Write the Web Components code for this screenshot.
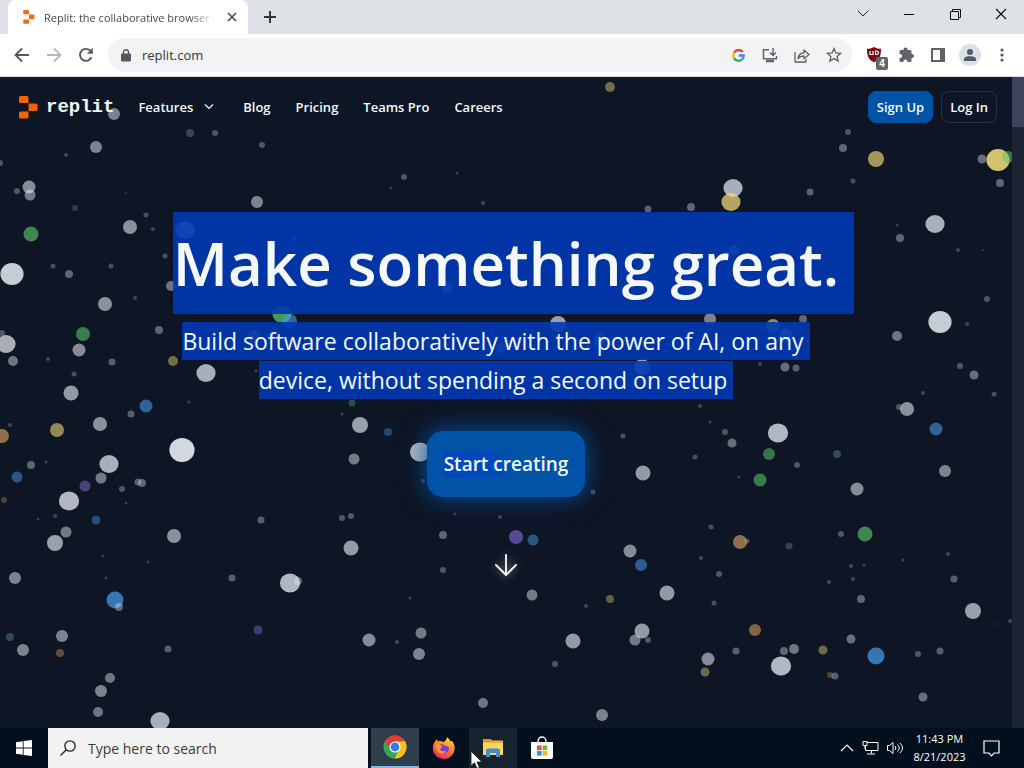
<!DOCTYPE html>
<html lang="en">
<head>
<meta charset="utf-8">
<title>Replit: the collaborative browser based IDE</title>
<style>
  body {
    margin: 0;
    height: 100vh;
    display: flex;
    flex-direction: column;
    overflow: hidden;
    font-family: "Open Sans", "Noto Sans", sans-serif;
  }
  site-page { flex: 1; min-height: 0; }
</style>
</head>
<body>
<browser-tabs>Replit: the collaborative browser based IDE</browser-tabs>
<browser-toolbar address="replit.com" blocked="4"></browser-toolbar>
<site-page>
  <star-field slot="background"></star-field>
  <site-nav></site-nav>
  <hero-banner>
    <span slot="title">Make something great.</span>
    <span slot="line-one">Build software collaboratively with the power of AI, on any</span>
    <span slot="line-two">device, without spending a second on setup</span>
    <span slot="action">Start creating</span>
  </hero-banner>
</site-page>
<task-bar time="11:43 PM" date="8/21/2023"></task-bar>

<script>
// Base element: clones the static template of the class into an open shadow root
class BaseElement extends HTMLElement {
  constructor() {
    super();
    this.attachShadow({ mode: 'open' });
    const template = document.createElement('template');
    template.innerHTML = `
      <style>
        * { box-sizing: border-box; }
        button { font: inherit; color: inherit; background: none; border: 0; padding: 0; display: flex; align-items: center; justify-content: center; }
        a { color: inherit; text-decoration: none; }
        input { font: inherit; color: inherit; border: 0; outline: 0; background: none; padding: 0; min-width: 0; }
        svg { display: block; flex: none; }
      </style>
      ${this.constructor.markup}
    `;
    this.shadowRoot.appendChild(template.content.cloneNode(true));
  }
}

const replitMark = `
  <path d="M1 0h7a1.500 1.500 0 0 1 1.500 1.500V7H1.500A1.500 1.500 0 0 1 0 5.500V1.500A1.500 1.500 0 0 1 1.500 0z"/>
  <path d="M9.500 7.500H17A1.500 1.500 0 0 1 18.500 9v4.500A1.500 1.500 0 0 1 17 15H9.500z"/>
  <path d="M1.500 15.500h8V21A1.500 1.500 0 0 1 8 22.500H1.500A1.500 1.500 0 0 1 0 21v-4A1.500 1.500 0 0 1 1.500 15.500z"/>`;

class BrowserTabs extends BaseElement {
  static markup = `
    <style>
      :host { display: flex; align-items: stretch; height: 34px; background: #dee1e6; color: #45494d; font: 11px "Open Sans", sans-serif; }
      .tab { display: flex; align-items: center; width: 240px; margin-left: 8px; padding: 0 7px 0 14px; background: #fff; border-radius: 8px 8px 0 0; gap: 8px; }
      .title { flex: 1; overflow: hidden; white-space: nowrap; mask-image: linear-gradient(to right, #000 85%, transparent); }
      .close { width: 18px; }
      .new { width: 44px; }
      .window { display: flex; margin-left: auto; }
      .window button { width: 46px; height: 28px; }
    </style>
    <div class="tab">
      <svg width="14" height="14" viewBox="0 0 19 23" fill="#ef6a1c">${replitMark}</svg>
      <span class="title"><slot></slot></span>
      <button class="close" aria-label="Close tab"><svg width="10" height="10" viewBox="0 0 10 10" stroke="#45494d" stroke-width="1.600"><path d="M1 1l8 8M9 1l-8 8"/></svg></button>
    </div>
    <button class="new" aria-label="New tab"><svg width="12" height="12" viewBox="0 0 12 12" stroke="#33363a" stroke-width="2"><path d="M6 0v12M0 6h12"/></svg></button>
    <div class="window">
      <button aria-label="Search tabs"><svg width="12" height="8" viewBox="0 0 12 8" fill="none" stroke="#222"><path d="M1 1l5 5 5-5"/></svg></button>
      <button aria-label="Minimize"><svg width="10" height="10" viewBox="0 0 10 10" stroke="#111"><path d="M0 5.500h10"/></svg></button>
      <button aria-label="Restore"><svg width="11" height="11" viewBox="0 0 11 11" fill="none" stroke="#111"><path d="M.5 2.500h8v8h-8zM2.500 2.500v-2h8v8h-2"/></svg></button>
      <button aria-label="Close"><svg width="12" height="12" viewBox="0 0 12 12" stroke="#111" stroke-width="1.200"><path d="M1 1l10 10M11 1L1 11"/></svg></button>
    </div>
  `;
}

class BrowserToolbar extends BaseElement {
  static markup = `
    <style>
      :host { display: flex; align-items: center; height: 43px; padding: 0 6px; background: #fff; color: #5f6368; border-bottom: 1px solid #dadce0; box-sizing: border-box; }
      .tool { width: 32px; height: 32px; }
      label { display: flex; flex: 1; align-items: center; height: 34px; margin: 0 6px; padding: 0 2px 0 13px; gap: 11px; border-radius: 17px; background: #f1f3f4; color: #333639; font: 13px "Open Sans", sans-serif; }
      input { flex: 1; }
      .inside { display: flex; }
      .shield { position: relative; }
      .count { position: absolute; right: 2px; bottom: 1px; width: 12px; height: 13px; border-radius: 2px; background: #666; color: #fff; font: bold 10px/13px "Liberation Sans", sans-serif; }
      .avatar { width: 22px; height: 22px; border-radius: 50%; background: #dde1e7; display: flex; align-items: center; justify-content: center; }
    </style>
    <button class="tool" aria-label="Back"><svg width="16" height="16" viewBox="0 0 16 16" fill="none" stroke="#54575b" stroke-width="1.800"><path d="M15 8H2M8 1.500L1.500 8 8 14.500"/></svg></button>
    <button class="tool" aria-label="Forward"><svg width="16" height="16" viewBox="0 0 16 16" fill="none" stroke="#b5b7ba" stroke-width="1.800"><path d="M1 8h13M8 1.500L14.500 8 8 14.500"/></svg></button>
    <button class="tool" aria-label="Reload"><svg width="16" height="16" viewBox="0 0 16 16"><path d="M13.500 10.200A6 6 0 1 1 12.600 4L14 5.500" fill="none" stroke="#54575b" stroke-width="1.900"/><path d="M14.800.8v6H8.800z" fill="#54575b"/></svg></button>
    <label>
      <svg width="10" height="13" viewBox="0 0 10 13"><rect y="4.500" width="10" height="8" rx="1" fill="#54575b"/><path d="M2.500 5V3.200a2.500 2.500 0 0 1 5 0V5" fill="none" stroke="#54575b" stroke-width="1.400"/></svg>
      <input type="text" aria-label="Address and search bar">
      <span class="inside">
        <button class="tool" aria-label="Google"><svg width="13" height="13" viewBox="0 0 13 13" fill="none" stroke-width="2.300"><path d="M10.700 3A5.200 5.200 0 0 0 2 3.800" stroke="#ea4335"/><path d="M2 3.800a5.200 5.200 0 0 0 0 5.400" stroke="#fbbc05"/><path d="M2 9.200a5.200 5.200 0 0 0 7.800 1.400" stroke="#34a853"/><path d="M9.800 10.600a5 5 0 0 0 1.900-4.100H6.700" stroke="#4285f4"/></svg></button>
        <button class="tool" aria-label="Install"><svg width="16" height="15" viewBox="0 0 16 15" fill="none" stroke="#5f6368" stroke-width="1.500"><path d="M7 1.800H1.500v9h13V8M11 0v7M8 4.500l3 3 3-3"/><path d="M4 13h8" stroke-width="2.500"/></svg></button>
        <button class="tool" aria-label="Share"><svg width="16" height="15" viewBox="0 0 16 15" fill="none" stroke="#5f6368" stroke-width="1.300" stroke-linejoin="round"><path d="M1 4v10h11v-3M4 10.500c.5-4 3-5.500 6-5.500V2l5 4.500-5 4.300V8c-2.500 0-4.500.5-6 2.500z"/></svg></button>
        <button class="tool" aria-label="Bookmark"><svg width="16" height="16" viewBox="0 0 16 16" fill="none" stroke="#5f6368" stroke-width="1.300"><path d="M8 1.500l1.900 4.400 4.800.4-3.600 3.100 1.100 4.700L8 11.600l-4.200 2.500 1.100-4.700L1.300 6.300l4.800-.4z"/></svg></button>
      </span>
    </label>
    <button class="tool shield" aria-label="Ad blocker"><svg width="16" height="18" viewBox="0 0 16 18"><path d="M8 1c2 1.300 4.500 1.800 7 1.800 0 6-.5 10.200-7 13.700C1.500 13 1 8.800 1 2.800 3.500 2.800 6 2.300 8 1z" fill="#800610"/><path d="M4 5v3.500h3V5M9.500 5h1.200a1.600 1.600 0 0 1 0 3.500H9.500z" fill="none" stroke="#fff" stroke-width="1.200"/></svg><span class="count"></span></button>
    <button class="tool" aria-label="Extensions"><svg width="16" height="16" viewBox="0 0 16 16" fill="#5f6368"><path d="M1.500 4.500A1.500 1.500 0 0 1 3 3h2.500v-.5a2 2 0 0 1 4 0V3H12a1.500 1.500 0 0 1 1.500 1.500V7h.5a2 2 0 0 1 0 4h-.5v2.500A1.500 1.500 0 0 1 12 15H9.400v-.6a2 2 0 0 0-4 0v.6H3a1.500 1.500 0 0 1-1.500-1.500v-2.600h.6a2 2 0 0 0 0-4h-.6z"/></svg></button>
    <button class="tool" aria-label="Side panel"><svg width="14" height="14" viewBox="0 0 14 14"><path d="M1 1h12v12H1z" fill="none" stroke="#5f6368" stroke-width="2"/><path d="M9 1h4v12H9z" fill="#5f6368"/></svg></button>
    <button class="tool" aria-label="Profile"><span class="avatar"><svg width="12" height="12" viewBox="0 0 12 12" fill="#4f5b69"><circle cx="6" cy="3" r="3"/><path d="M0 12V9.800C0 7.800 4 7.200 6 7.200s6 .6 6 2.600V12z"/></svg></span></button>
    <button class="tool" aria-label="Menu"><svg width="4" height="14" viewBox="0 0 4 14" fill="#54575b"><circle cx="2" cy="2" r="1.600"/><circle cx="2" cy="7" r="1.600"/><circle cx="2" cy="12" r="1.600"/></svg></button>
  `;
  connectedCallback() {
    this.shadowRoot.querySelector('input').value = this.getAttribute('address');
    this.shadowRoot.querySelector('.count').textContent = this.getAttribute('blocked');
  }
}

class SitePage extends BaseElement {
  static markup = `
    <style>
      :host { display: flex; background: #0e1525; color: #f5f9fc; }
      main { position: relative; flex: 1; min-width: 0; }
      .content { position: relative; display: flex; flex-direction: column; }
      ::slotted([slot="background"]) { position: absolute; inset: 0; }
      .track { width: 12px; background: #1c2333; }
      .thumb { height: 50px; background: #3c445c; }
    </style>
    <main>
      <slot name="background"></slot>
      <div class="content"><slot></slot></div>
    </main>
    <div class="track"><div class="thumb"></div></div>
  `;
}

// x, y, radius and optional colour key of every particle
const stars = [
  [96,147,6],[66,155,2],[0,163,3],[29,187,6.5],[17,191,3],[30,195,5.5],[75,208,3,'b'],[126,193,1],[31,234,7.5,'g'],
  [130,227,7],[146,215,2.5],[153,229,2],[190,133,4,'t'],[215,133,3],[257,202,6],[12,274,11],[53,266,2.5],[69,274,4],
  [111,266,2.5],[165,256,2.5],[105,304,7],[135,298,2],[171,286,5],[6,344,9],[2,333,3],[83,334,7,'g'],[79,350,6.5],
  [13,361,5],[48,359,2],[112,362,3.5],[74,374,2.5],[159,330,4],[173,361,5,'y'],[206,373,9],[71,393,7.5],
  [146,406,6.5,'b'],[131,414,3.5],[100,424,7],[57,430,7,'y'],[10,425,2],[185,230,9],[282,314,9,'g'],[290,321,7,'b'],
  [256,371,1.5],[189,402,1.5],[2,436,7,'o'],[182,450,12],[109,464,9],[31,465,4],[46,462,1.5],[17,477,5.5,'b'],
  [101,478,5.5],[85,486,5.5,'p'],[138,482,3.5],[142,483,4],[122,489,3],[126,503,1.5],[69,501,9.5],[4,500,3,'o'],
  [55,516,2],[38,519,1.5],[96,520,4.5,'b'],[66,532,5.5],[55,543,8],[174,536,7],[103,556,1.5],[148,562,1.5],
  [15,578,6],[106,578,1.5],[115,600,8.5,'b'],[119,607,4],[232,578,3.5],[10,637,4,'t'],[62,636,6],[23,650,6],
  [60,653,4,'o'],[168,649,3.5],[258,630,4.5,'p'],[110,678,5],[101,691,6],[98,712,5],[160,721,9],
  [352,403,3.5,'g'],[342,414,1.5],[360,425,8],[388,432,4,'b'],[354,459,5.5],[420,452,9.5],[423,481,2],[593,492,2.5],
  [261,520,3.5],[342,518,3],[351,516,3],[351,548,7.5],[443,535,4],[455,514,1.5],[500,517,2],[516,537,7,'p'],
  [533,540,5.5,'b'],[443,570,3],[290,583,9.5],[298,581,4],[410,598,1.5],[532,595,5.5],[586,606,2],[369,640,6.5],
  [397,642,2],[421,633,5.5],[419,654,6],[573,641,7.5],[555,664,3],[483,703,5],[602,715,6],
  [710,422,1.5],[725,432,3],[623,436,2.5],[732,443,4.5],[778,433,9.5],[936,429,6.5,'b'],[769,454,6,'g'],
  [837,454,4,'t'],[695,457,2.5],[643,473,7.5],[797,465,3],[945,471,6],[760,480,6.5,'g'],[739,477,1.5],[857,489,6.5],
  [711,527,2.5],[740,542,7,'o'],[747,541,2.5],[841,534,3],[865,534,7.5,'g'],[789,546,3.5,'t'],[630,551,6.5],
  [641,565,6,'b'],[701,558,2],[719,574,3],[851,566,2],[864,565,1.5],[853,579,2],[829,582,2],[903,560,1.5],
  [948,554,2],[954,579,3.5],[667,593,7.5],[714,603,2.5],[610,599,4,'y'],[861,599,4],[973,611,8],[642,631,7.5],
  [635,640,5.5],[648,640,3],[755,630,6,'o'],[851,639,4.5],[736,651,3.5],[784,651,4],[794,649,5],[823,650,4.5,'y'],
  [781,666,9.5],[708,659,6.5],[705,672,4.5,'y'],[830,675,3,'o'],[835,676,3.5],[876,656,8.5,'b'],[918,654,3],
  [940,651,3.5],[923,697,4.5],[1010,621,2],[995,624,1],
  [848,132,3],[843,148,4],[876,159,8,'y'],[853,181,2.5],[810,192,3.5],[982,159,4.5],[998,160,11,'y'],[1008,157,6,'g'],
  [1000,183,4],[935,224,9],[897,225,1.5],[900,238,4],[958,250,2],[983,250,1],[987,299,3],[940,322,11],[967,324,2],
  [897,336,5],[773,326,7,'y'],[803,319,4],[785,367,4.5],[796,368,3.5],[960,366,3],[974,375,4.5],[923,393,2],
  [994,394,2.5],[907,409,7],[899,407,3],
  [610,87,5,'y'],[114,114,6],[262,145,3],[404,177,3],[457,173,1.5],[391,188,1.5],[733,188,9],[731,202,9,'y'],
  [691,207,4],[648,209,3.5],[483,203,2],[558,324,8],[710,319,6],[642,367,8],[447,287,6],[734,250,5],[786,335,7],
  [760,364,2],[700,406,2],[295,239,3],[254,336,6],[501,348,5],[600,340,6]
];
const starColors = { w: '#e4e8f0', g: '#5cc96b', b: '#4a9ff0', y: '#f0dc75', o: '#f0ac68', p: '#8a70dc', t: '#6fa39c' };

class StarField extends BaseElement {
  static markup = `
    <style>
      :host { display: block; overflow: hidden; }
      svg { width: 100%; height: 100%; }
    </style>
    <svg viewBox="0 77 1012 651" preserveAspectRatio="xMidYMid slice" aria-hidden="true"></svg>
  `;
  connectedCallback() {
    // bigger particles are closer, so they are also brighter
    this.shadowRoot.querySelector('svg').innerHTML = stars.map(([x, y, r, color = 'w']) => {
      const opacity = Math.min(0.92, 0.1 + r * 0.07).toFixed(2);
      const rx = r > 8.5 ? r + 0.6 : r;
      return `<ellipse cx="${x}" cy="${y}" rx="${rx}" ry="${r}" fill="${starColors[color]}" opacity="${opacity}"/>`;
    }).join('');
  }
}

class SiteNav extends BaseElement {
  static markup = `
    <style>
      :host { display: flex; align-items: center; height: 60px; padding: 0 15px 0 19px; font: 600 13px "Open Sans", sans-serif; }
      .logo { display: flex; align-items: center; gap: 8px; margin-right: 24px; font: bold 19px/22px "Liberation Mono", monospace; }
      nav { display: flex; align-items: center; gap: 25px; }
      .menu { gap: 11px; margin-right: 4px; }
      .account { display: flex; gap: 8px; margin-left: auto; }
      .account a { display: flex; align-items: center; height: 32px; padding: 0 8px; border: 1px solid #2b3245; border-radius: 8px; }
      .account .primary { background: #0053a6; border-color: #0053a6; }
    </style>
    <a class="logo" href="#"><svg width="19" height="23" viewBox="0 0 19 23" fill="#f26207">${replitMark}</svg>replit</a>
    <nav>
      <button class="menu">Features <svg width="10" height="6" viewBox="0 0 10 6" fill="none" stroke="#f5f9fc" stroke-width="1.200"><path d="M1 .5l4 4 4-4"/></svg></button>
      <a href="#">Blog</a>
      <a href="#">Pricing</a>
      <a href="#">Teams Pro</a>
      <a href="#">Careers</a>
    </nav>
    <div class="account">
      <a class="primary" href="#">Sign Up</a>
      <a href="#">Log In</a>
    </div>
  `;
}

class HeroBanner extends BaseElement {
  static markup = `
    <style>
      :host { display: flex; flex-direction: column; align-items: center; padding-top: 75px; }
      h1, p { margin: 0; }
      mark { color: inherit; background: rgba(0, 56, 180, .9); }
      h1 { font: 600 60px/102px "Open Sans", sans-serif; }
      h1 mark { display: block; padding-right: 15px; margin-right: -15px; white-space: nowrap; }
      p { display: flex; flex-direction: column; align-items: center; gap: 1px; margin-top: 8px; padding-right: 20px; font: 500 23px/38px "Open Sans", sans-serif; }
      p mark { padding-right: 6px; }
      .action { margin-top: 32px; padding: 0 17px; height: 66px; border-radius: 16px; background: #0053a6; box-shadow: 0 0 24px #0053a6; font: 600 19px "Open Sans", sans-serif; }
      .action span { background: linear-gradient(to right, #0047bf 35%, transparent 58%); }
      .down { margin-top: 55px; width: 32px; height: 26px; filter: drop-shadow(0 0 4px #ffffff80); }
    </style>
    <h1><mark><slot name="title"></slot></mark></h1>
    <p>
      <mark><slot name="line-one"></slot></mark>
      <mark><slot name="line-two"></slot></mark>
    </p>
    <button class="action"><span><slot name="action"></slot></span></button>
    <button class="down" aria-label="Scroll down"><svg width="22" height="22" viewBox="0 0 22 22" fill="none" stroke="#fff" stroke-width="1.800" stroke-linecap="round" stroke-linejoin="round"><path d="M11 1v20M1 11l10 10 10-10"/></svg></button>
  `;
}

class TaskBar extends BaseElement {
  static markup = `
    <style>
      :host { position: relative; display: flex; height: 40px; background: #01101c; color: #fff; font: 11px "Open Sans", sans-serif; }
      .start, .app { width: 48px; }
      label { display: flex; align-items: center; flex: 0 1 320px; gap: 12px; padding: 0 12px; margin-right: 3px; background: #f2f2f2; color: #333; font-size: 14px; }
      input { flex: 1; }
      input::placeholder { color: #3b3b3b; opacity: 1; }
      .apps { display: flex; gap: 1px; }
      .active { background: #303e49; border-bottom: 2px solid #76b9ed; }
      .hover { background: #15242f; }
      .tray { display: flex; align-items: center; margin-left: auto; gap: 8px; padding-right: 24px; }
      .clock { display: flex; flex-direction: column; align-items: center; line-height: 18px; width: 55px; }
      .note { margin-left: 8px; }
      .pointer { position: absolute; left: 470px; top: 22px; }
    </style>
    <button class="start" aria-label="Start"><svg width="16" height="16" viewBox="0 0 16 16" fill="#fff"><path d="M0 2.200L6.800 1.200V7.600H0zM7.600 1.100L16 0v7.600H7.600zM0 8.400h6.800v6.400L0 13.800zM7.600 8.400H16V16l-8.400-1.100z"/></svg></button>
    <label>
      <svg width="16" height="16" viewBox="0 0 16 16" fill="none" stroke="#222" stroke-width="1.300"><circle cx="10" cy="6" r="5.200"/><path d="M6.300 9.700L.5 15.500"/></svg>
      <input type="search" placeholder="Type here to search" aria-label="Type here to search">
    </label>
    <div class="apps">
      <button class="app active" aria-label="Chrome"><svg width="24" height="24" viewBox="0 0 24 24"><circle cx="12" cy="12" r="11.500" fill="#34a853"/><path d="M2 6.300A11.500 11.500 0 0 1 22 6.300L12 12 8 16z" fill="#e33b2e"/><path d="M22 6.300A11.500 11.500 0 0 1 11.500 23.500L16.500 14 12 6.300z" fill="#fbc116"/><circle cx="12" cy="12" r="5.600" fill="#fff"/><circle cx="12" cy="12" r="4.400" fill="#2f7de9"/></svg></button>
      <button class="app" aria-label="Firefox"><svg width="24" height="24" viewBox="0 0 24 24"><defs><linearGradient id="fox" x1=".8" y1="0" x2=".3" y2="1"><stop offset="0" stop-color="#ffe43c"/><stop offset=".5" stop-color="#ff7b27"/><stop offset="1" stop-color="#ee2468"/></linearGradient></defs><path d="M15 1c2 1.500 3 3 3.500 4.500L20 4.800c3 4 3.500 8 1.700 12A11 11 0 0 1 1.300 15C.3 11 1 7.500 3.500 5l.5-2 2 2.200C8 4.800 9.500 5 11 6c2-.5 3.500-2 4-5z" fill="url(#fox)"/><path d="M8 8.500c2-.8 4 .3 4.500 1.500 2-.6 4 .3 4.500 2.500a5 5 0 0 1-9.800 1.300l3-2.300z" fill="#7443cf"/><path d="M4 9c2-1.500 4.500-.5 6 1.500L7.500 13c1.500 2.500 4.500 3 6.500 1.500-1 3.500-7 4-9 0-1-1.800-1.500-3.800-1-5.500z" fill="#ff9830"/></svg></button>
      <button class="app hover" aria-label="File Explorer"><svg width="22" height="20" viewBox="0 0 22 20"><path d="M1 1h8l2 3v3H1z" fill="#d99a24"/><path d="M1 4.500h20V17H1z" fill="#fcd462"/><path d="M9 2.500h12V5H9z" fill="#f0ad35"/><path d="M4 19V12.500q0-2 2-2h10q2 0 2 2V19h-4v-4H8v4z" fill="#3c8fd0"/></svg></button>
      <button class="app" aria-label="Microsoft Store"><svg width="22" height="24" viewBox="0 0 22 24"><path d="M7 7V5a4 4 0 0 1 8 0v2" fill="none" stroke="#fff" stroke-width="1.300"/><path d="M0 6h22v15a2 2 0 0 1-2 2H2a2 2 0 0 1-2-2z" fill="#fff"/><path d="M6 9.500h4.600v4.600H6z" fill="#e5532c"/><path d="M11.600 9.500h4.600v4.600h-4.600z" fill="#7bb61b"/><path d="M6 15h4.600v4.600H6z" fill="#2196dd"/><path d="M11.600 15h4.600v4.600h-4.600z" fill="#f5b31c"/></svg></button>
    </div>
    <div class="tray">
      <button aria-label="Show hidden icons"><svg width="14" height="8" viewBox="0 0 14 8" fill="none" stroke="#fff" stroke-width="1.200"><path d="M1 7l6-6 6 6"/></svg></button>
      <button aria-label="Network"><svg width="17" height="14" viewBox="0 0 17 14" fill="none" stroke="#fff"><path d="M5 1.500h11v8H3.500V5M9.500 9.500v3M5 13h8M1 .5h4v4H1zM3 4.500V8"/></svg></button>
      <button aria-label="Volume"><svg width="17" height="14" viewBox="0 0 17 14" fill="none" stroke="#fff"><path d="M.5 4.500h2L6 1.500v11L2.500 9.500h-2zM8 5q2 2 0 4M10.500 3.500q3.500 3.500 0 7M13 2q5 5 0 10"/></svg></button>
      <time class="clock"></time>
      <button class="note" aria-label="Notifications"><svg width="17" height="17" viewBox="0 0 17 17" fill="none" stroke="#fff" stroke-width="1.200"><path d="M1 1h15v12h-5l-2.500 2.800L6 13H1z"/></svg></button>
    </div>
    <svg class="pointer" width="13" height="20" viewBox="0 0 13 20" aria-hidden="true"><path d="M1 1v15l3.500-3.300L7 18.500l2.500-1L7 12h4.800z" fill="#fff" stroke="#111" stroke-width=".8"/></svg>
  `;
  connectedCallback() {
    for (const name of ['time', 'date']) {
      const row = document.createElement('span');
      row.textContent = this.getAttribute(name);
      this.shadowRoot.querySelector('.clock').appendChild(row);
    }
  }
}

customElements.define('browser-tabs', BrowserTabs);
customElements.define('browser-toolbar', BrowserToolbar);
customElements.define('site-page', SitePage);
customElements.define('star-field', StarField);
customElements.define('site-nav', SiteNav);
customElements.define('hero-banner', HeroBanner);
customElements.define('task-bar', TaskBar);
</script>
</body>
</html>
